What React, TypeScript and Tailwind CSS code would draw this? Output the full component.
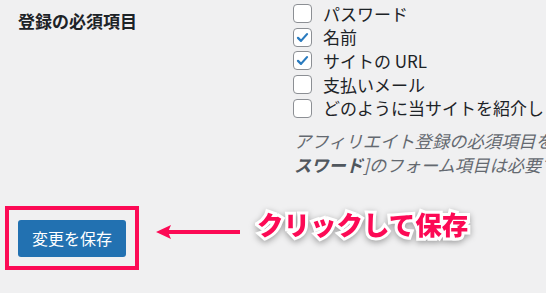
import React from 'react';

const fields = [
  { label: 'パスワード', checked: false },
  { label: '名前', checked: true },
  { label: 'サイトの URL', checked: true },
  { label: '支払いメール', checked: false },
  { label: 'どのように当サイトを紹介しますか ?', checked: false },
];

const Checkbox = ({ checked }: { checked: boolean }) => (
  <span className="w-[19px] h-[19px] shrink-0 rounded-[4px] border border-[#8c8f94] bg-white flex items-center justify-center">
    {checked && (
      <svg width="15" height="15" viewBox="0 0 20 20">
        <path d="M4 10.5l4 4 8-9" fill="none" stroke="#2a7bbf" strokeWidth="3" strokeLinecap="round" strokeLinejoin="round" />
      </svg>
    )}
  </span>
);

export default function App() {
  return (
    <div className="w-[546px] h-[293px] overflow-hidden bg-[#f0f0f1] text-[#1d2327] font-['Noto_Sans_CJK_JP',sans-serif]">
      <div className="flex">
        <div className="w-[293px] shrink-0 pl-[18px] pt-[9px] text-[17px] leading-[24px] font-bold">登録の必須項目</div>
        <div className="flex-1 min-w-0 overflow-hidden pt-[2px]">
          {fields.map(f => (
            <label key={f.label} className="flex items-center gap-[11px] h-[23.6px] text-[17px] whitespace-nowrap">
              <Checkbox checked={f.checked} />
              <span className="leading-[24px]">{f.label}</span>
            </label>
          ))}
          <div className="mt-[9px] pl-[1px] text-[17.3px] leading-[24px] italic text-[#646970] whitespace-nowrap">
            <p>アフィリエイト登録の必須項目を選択してください。[パ</p>
            <p><strong className="font-bold text-[#50575e]">スワード</strong>]のフォーム項目は必要です。</p>
          </div>
        </div>
      </div>

      <div className="flex items-start mt-[29px]">
        <div className="ml-[5px] border-[4px] border-[#fc0a55] pt-[10px] pb-[9px] px-[9px]">
          <button className="w-[108px] h-[37px] rounded-[3px] bg-[#2271b1] text-white text-[16px] leading-none">変更を保存</button>
        </div>
        <svg className="ml-[17px] mt-[18px]" width="84" height="16" viewBox="0 0 84 16">
          <path d="M10 8H84" stroke="#fc0a55" strokeWidth="4" />
          <path d="M0 8L15 1L12 8L15 15Z" fill="#fc0a55" />
        </svg>
        <div className="ml-[17px] mt-[2px] text-[26.5px] leading-[32px] font-black text-[#fc0a55] whitespace-nowrap [-webkit-text-stroke:6px_white] [paint-order:stroke_fill] drop-shadow-[0_2px_3px_rgba(0,0,0,0.35)]">
          クリックして保存
        </div>
      </div>
    </div>
  );
}
